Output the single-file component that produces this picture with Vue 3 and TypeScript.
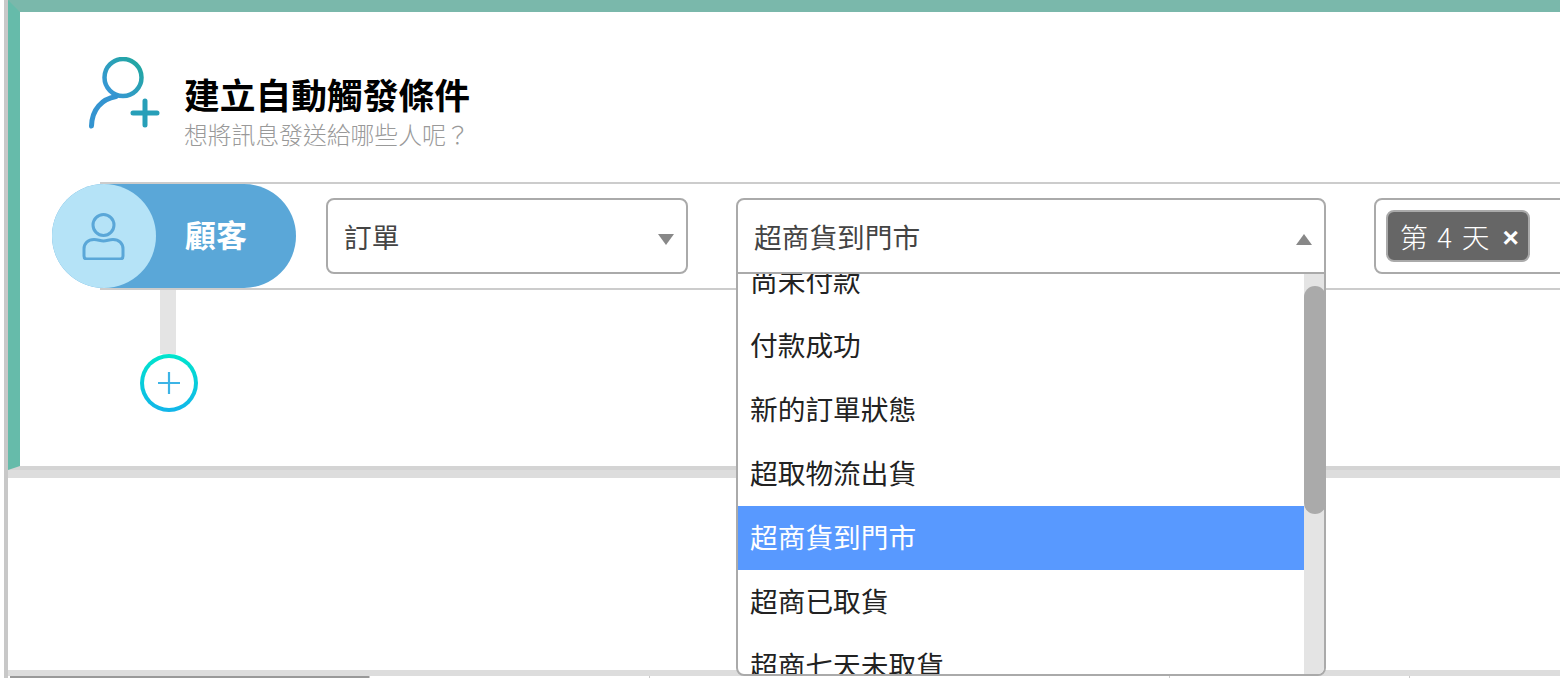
<script setup lang="ts">
const options: string[] = ['尚未付款', '付款成功', '新的訂單狀態', '超取物流出貨', '超商貨到門市', '超商已取貨', '超商七天未取貨']
const selected = '超商貨到門市'
const columns: { width: number; active: boolean }[] = [
  { width: 360, active: true },
  { width: 280, active: false },
  { width: 520, active: false },
  { width: 240, active: false },
  { width: 151, active: false },
]
</script>

<template>
  <div class="page">
    <div class="frame">
      <section class="card">
        <header class="head">
          <svg class="head-icon" width="72" height="74" viewBox="0 0 72 74" fill="none">
            <defs>
              <linearGradient id="hg" x1="0" y1="1" x2="1" y2="0">
                <stop offset="0" stop-color="#3a95dc" />
                <stop offset="1" stop-color="#1fa89c" />
              </linearGradient>
            </defs>
            <circle cx="35" cy="20.5" r="18.5" stroke="url(#hg)" stroke-width="4.5" />
            <path d="M3.5 69 C4 52 14 42 28 39.5" stroke="#3494d0" stroke-width="5" stroke-linecap="round" />
            <path d="M45 56 H69 M57 44 V68" stroke="#279fb8" stroke-width="5" stroke-linecap="round" />
          </svg>
          <div class="head-text">
            <h1 class="title">建立自動觸發條件</h1>
            <p class="sub">想將訊息發送給哪些人呢？</p>
          </div>
        </header>

        <div class="row">
          <div class="pill">
            <span class="pill-avatar">
              <svg width="46" height="48" viewBox="0 0 46 48" fill="none" stroke="#5aa7d8" stroke-width="3">
                <circle cx="22.5" cy="13" r="10.5" />
                <path d="M3 37 C3 31.5 7 27.5 13 27.5 C17 27.5 19 29 22.5 29 C26 29 28 27.5 32 27.5 C38 27.5 42 31.5 42 37 V44 C42 46 41 47 39 47 H6 C4 47 3 46 3 44 Z" />
              </svg>
            </span>
            <span class="pill-label">顧客</span>
          </div>

          <div class="select first">
            <span class="select-text">訂單</span>
            <i class="caret down"></i>
          </div>

          <div class="select second">
            <span class="select-text">{{ selected }}</span>
            <i class="caret up"></i>
            <div class="dropdown">
              <ul class="list">
                <li v-for="o in options" :key="o" class="option" :class="{ on: o === selected }">{{ o }}</li>
              </ul>
              <div class="track"></div>
              <div class="thumb"></div>
            </div>
          </div>

          <div class="select third">
            <span class="tag">第 4 天<b class="tag-x">×</b></span>
          </div>
        </div>

        <div class="stem"></div>
        <button class="add" type="button">
          <svg width="24" height="24" viewBox="0 0 24 24" fill="none" stroke="#3cb4e6" stroke-width="2.2">
            <path d="M1 12 H23 M12 1 V23" />
          </svg>
        </button>
      </section>

      <div class="panel"></div>

      <div class="table-head">
        <span
          v-for="(c, i) in columns"
          :key="i"
          class="col"
          :class="{ active: c.active }"
          :style="{ width: c.width + 'px' }"
        ></span>
      </div>
    </div>
  </div>
</template>

<style>
html, body { margin: 0; padding: 0; overflow: hidden; background: #fff; }
</style>

<style scoped>
.page {
  width: 1560px;
  height: 678px;
  overflow: hidden;
  box-sizing: border-box;
  padding-left: 4px;
  background: #fff;
  font-family: "Noto Sans CJK TC", "Noto Sans", sans-serif;
}
.frame {
  width: 1556px;
  height: 678px;
  box-sizing: border-box;
  border-left: 4px solid #c8c8c8;
  display: flex;
  flex-direction: column;
}
.card {
  height: 470px;
  box-sizing: border-box;
  flex: none;
  border-top: 12px solid #7ab8ab;
  border-left: 12px solid #66bbaa;
  border-bottom: 4px solid #d4d4d4;
  background: #fff;
  display: flex;
  flex-direction: column;
  align-items: flex-start;
}
.head {
  display: flex;
  align-items: flex-start;
  height: 170px;
  box-sizing: border-box;
  padding: 45px 0 0 68px;
  flex: none;
}
.head-icon { flex: none; margin-right: 25px; }
.head-text { padding-top: 12px; margin-left: -1px; }
.title {
  margin: 0;
  font-size: 35.75px;
  line-height: 50px;
  font-weight: 700;
  color: #000;
  white-space: nowrap;
}
.sub {
  margin: 0;
  font-size: 23.8px;
  line-height: 30px;
  font-weight: 300;
  color: #999;
  white-space: nowrap;
}
.row {
  flex: none;
  width: 1600px;
  height: 108px;
  box-sizing: border-box;
  margin-left: 80px;
  border-top: 2px solid #ccc;
  border-bottom: 2px solid #ccc;
  display: flex;
  align-items: center;
}
.pill {
  flex: none;
  width: 244px;
  height: 104px;
  margin-left: -48px;
  border-radius: 52px;
  background: #5aa7d8;
  display: flex;
  align-items: center;
}
.pill-avatar {
  flex: none;
  width: 104px;
  height: 104px;
  border-radius: 50%;
  background: #b5e3f7;
  display: flex;
  align-items: center;
  justify-content: center;
}
.pill-label {
  margin-left: 29px;
  padding-bottom: 6px;
  font-size: 31px;
  font-weight: 700;
  color: #fff;
  white-space: nowrap;
}
.select {
  position: relative;
  flex: none;
  height: 76px;
  box-sizing: border-box;
  border: 2px solid #aaa;
  border-radius: 8px;
  background: #fff;
  display: flex;
  align-items: center;
}
.first { width: 362px; margin-left: 30px; padding-left: 16px; }
.second { width: 590px; margin-left: 48px; padding-left: 16px; border-radius: 8px 8px 0 0; }
.third { width: 300px; margin-left: 48px; padding-left: 10px; }
.select-text {
  font-size: 27.7px;
  color: #444;
  white-space: nowrap;
}
.caret {
  position: absolute;
  right: 12px;
  top: 34px;
  width: 0;
  height: 0;
  border-left: 8px solid transparent;
  border-right: 8px solid transparent;
}
.caret.down { border-top: 11px solid #888; }
.caret.up { border-bottom: 11px solid #888; }
.dropdown {
  position: absolute;
  left: -2px;
  top: 72px;
  z-index: 5;
  width: 590px;
  height: 404px;
  box-sizing: border-box;
  border: 2px solid #aaa;
  border-radius: 0 0 8px 8px;
  background: #fff;
}
.list {
  list-style: none;
  margin: 0;
  padding: 0;
  width: 566px;
  height: 400px;
  overflow: hidden;
}
.option {
  height: 64px;
  line-height: 60px;
  padding-left: 12px;
  font-size: 27.7px;
  color: #222;
  white-space: nowrap;
}
.option:first-child { margin-top: -24px; }
.option.on { background: #5899ff; color: #fff; }
.track {
  position: absolute;
  top: 0;
  right: 0;
  bottom: 0;
  width: 20px;
  border-radius: 0 0 6px 0;
  background: #e4e4e4;
}
.thumb {
  position: absolute;
  top: 12px;
  right: -2px;
  width: 22px;
  height: 228px;
  border-radius: 11px;
  background: #aaa;
  z-index: 1;
}
.tag {
  display: flex;
  align-items: center;
  height: 52px;
  width: 144px;
  box-sizing: border-box;
  padding-left: 12px;
  border: 2px solid #aaa;
  border-radius: 8px;
  background: #666;
  color: #fff;
  font-size: 27.7px;
  font-weight: 300;
  word-spacing: 3.5px;
  white-space: pre;
}
.tag-x {
  margin-left: 13px;
  padding-top: 4px;
  font-family: "Liberation Sans", sans-serif;
  font-weight: 700;
  font-size: 28px;
}
.stem {
  flex: none;
  width: 16px;
  height: 64px;
  margin-left: 140px;
  background: #e4e4e4;
}
.add {
  flex: none;
  width: 58px;
  height: 58px;
  margin-left: 120px;
  padding: 0;
  box-sizing: border-box;
  border: 4px solid transparent;
  border-radius: 50%;
  background:
    linear-gradient(#fff, #fff) padding-box,
    linear-gradient(180deg, #00e5cc, #12b5ea) border-box;
  display: flex;
  align-items: center;
  justify-content: center;
}
.panel {
  flex: none;
  height: 200px;
  box-sizing: border-box;
  border-top: 8px solid #ddd;
  background: #fff;
}
.table-head {
  flex: none;
  height: 8px;
  box-sizing: border-box;
  border-top: 6px solid #ddd;
  display: flex;
  padding-left: 2px;
  background: #fff;
}
.col { display: block; height: 2px; box-sizing: border-box; border-right: 1px solid #ccc; flex: none; }
.col.active { background: #999; }
</style>
